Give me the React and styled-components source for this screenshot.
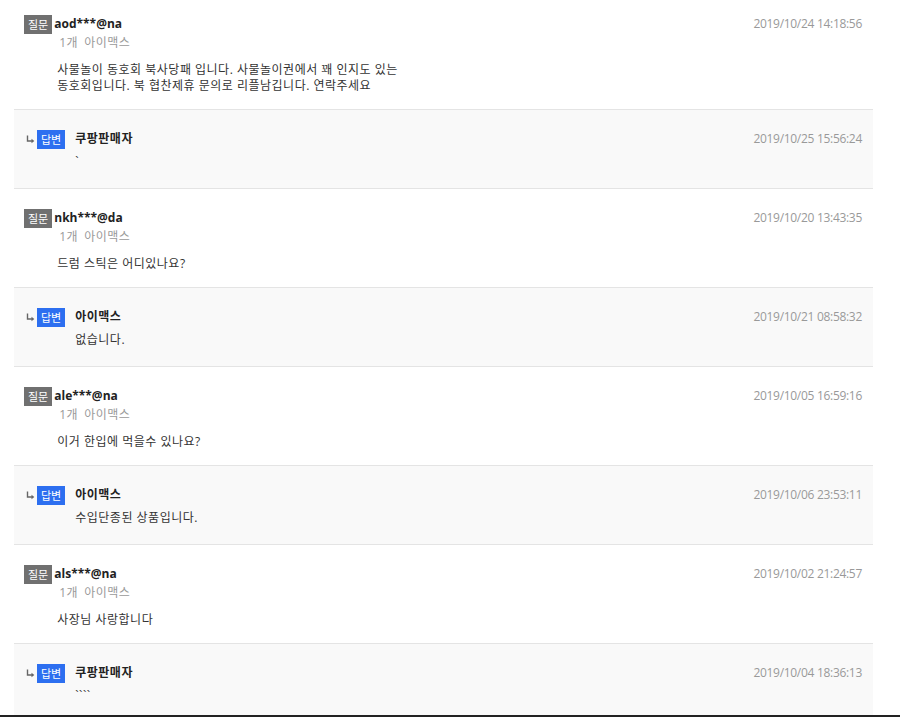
import React from "react";
import styled, { createGlobalStyle } from "styled-components";

const GlobalStyle = createGlobalStyle`
  html, body { margin: 0; padding: 0; background: #fff; }
  body { font-family: "Open Sans", "Noto Sans CJK KR", sans-serif; font-size: 12px; color: #333; }
  * { box-sizing: border-box; }
`;

const Page = styled.div`
  height: 717px;
  overflow: hidden;
  border-bottom: 2px solid #222;
  padding: 0 27px 0 14px;
`;

const List = styled.ul`
  list-style: none;
  margin: -5px 0 0;
  padding: 0;
`;

const Item = styled.li`
  display: flex;
  align-items: flex-start;
  border-bottom: 1px solid #e4e4e4;
  background: ${(p) => (p.$answer ? "#f9f9f9" : "#fff")};
  padding: ${(p) => (p.$answer ? "20px 11px 18px 12px" : "20px 11px 15px 10px")};
`;

const Arrow = styled.svg`
  flex: none;
  width: 9px;
  height: 9px;
  margin: 5px 2px 0 0;
`;

const Badge = styled.span`
  flex: none;
  display: inline-flex;
  align-items: center;
  justify-content: center;
  height: 19px;
  padding: 0 4px;
  margin-right: ${(p) => (p.$answer ? "10px" : "2px")};
  background: ${(p) => (p.$answer ? "#2d6ff0" : "#707070")};
  color: #fff;
  font-family: "Noto Sans CJK KR", sans-serif;
  font-size: 11px;
  line-height: 19px;
`;

const Body = styled.div`
  flex: 1;
  min-width: 0;
  padding-top: 1px;
`;

const Name = styled.div`
  font-weight: 700;
  color: #222;
  line-height: 16px;
  font-size: 12px;
  letter-spacing: ${(p) => (p.$kr ? "0.5px" : "0")};
`;

const Meta = styled.div`
  margin-top: 3px;
  line-height: 16px;
  color: #9a9a9a;
  display: flex;
  gap: 6px;
  padding-left: 5px;
  letter-spacing: 0.5px;
`;

const Content = styled.div`
  margin-top: ${(p) => (p.$answer ? "7px" : "11px")};
  line-height: 16px;
  color: #333;
  padding-left: ${(p) => (p.$answer ? "0" : "3px")};
  white-space: pre-line;
  letter-spacing: 0.5px;
`;

const DateText = styled.div`
  flex: none;
  color: #999;
  line-height: 16px;
  padding-top: 1px;
  letter-spacing: -0.3px;
`;

const ArrowIcon = () => (
  <Arrow viewBox="0 0 9 9">
    <path d="M1.5 0.5 V6 H7" fill="none" stroke="#666" strokeWidth="1.4" />
    <path d="M5.5 3.8 L8.3 6 L5.5 8.2 Z" fill="#666" />
  </Arrow>
);

const items = [
  {
    type: "q",
    name: "aod***@na",
    date: "2019/10/24 14:18:56",
    text: "사물놀이 동호회 북사당패 입니다. 사물놀이권에서 꽤 인지도 있는\n동호회입니다. 북 협찬제휴 문의로 리플남깁니다. 연락주세요",
  },
  { type: "a", name: "쿠팡판매자", date: "2019/10/25 15:56:24", text: "`" },
  { type: "q", name: "nkh***@da", date: "2019/10/20 13:43:35", text: "드럼 스틱은 어디있나요?" },
  { type: "a", name: "아이맥스", date: "2019/10/21 08:58:32", text: "없습니다." },
  { type: "q", name: "ale***@na", date: "2019/10/05 16:59:16", text: "이거 한입에 먹을수 있나요?" },
  { type: "a", name: "아이맥스", date: "2019/10/06 23:53:11", text: "수입단종된 상품입니다." },
  { type: "q", name: "als***@na", date: "2019/10/02 21:24:57", text: "사장님 사랑합니다" },
  { type: "a", name: "쿠팡판매자", date: "2019/10/04 18:36:13", text: "````" },
];

export default function App() {
  return (
    <>
      <GlobalStyle />
      <Page>
        <List>
          {items.map((it, i) => {
            const answer = it.type === "a";
            return (
              <Item key={i} $answer={answer}>
                {answer && <ArrowIcon />}
                <Badge $answer={answer}>{answer ? "답변" : "질문"}</Badge>
                <Body>
                  <Name $kr={answer}>{it.name}</Name>
                  {!answer && (
                    <Meta>
                      <span>1개</span>
                      <span>아이맥스</span>
                    </Meta>
                  )}
                  <Content $answer={answer}>{it.text}</Content>
                </Body>
                <DateText>{it.date}</DateText>
              </Item>
            );
          })}
        </List>
      </Page>
    </>
  );
}
